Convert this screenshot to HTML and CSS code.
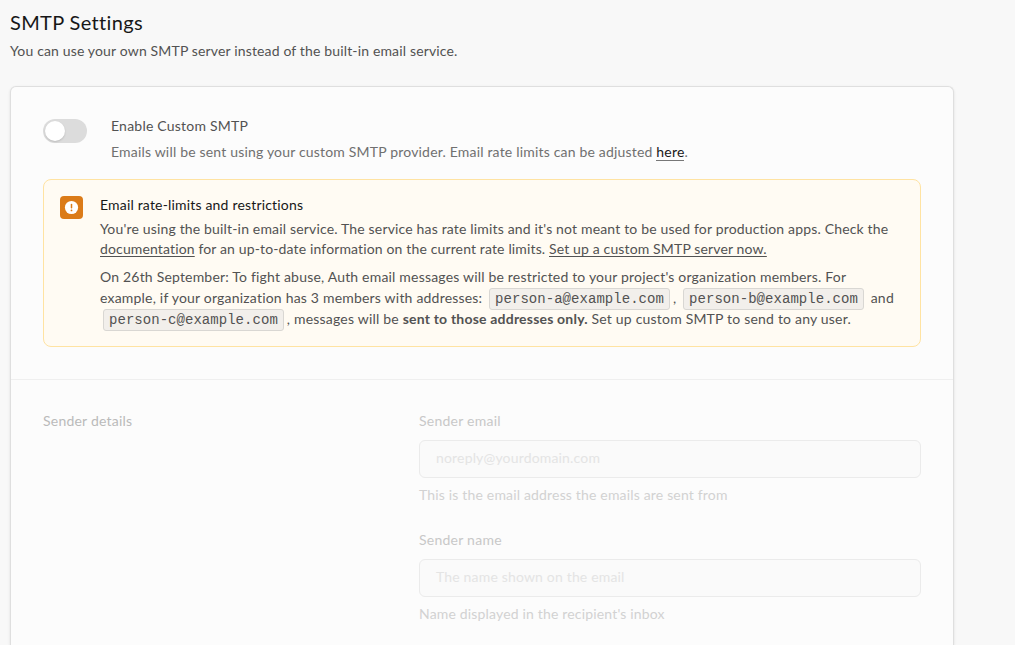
FILE: index.html
```html
<!DOCTYPE html>
<html lang="en">
<head>
<meta charset="utf-8">
<title>SMTP Settings</title>
<link rel="stylesheet" href="styles.css">
</head>
<body>
<main class="page">
  <header class="heading">
    <h1 class="title">SMTP Settings</h1>
    <p class="subtitle">You can use your own SMTP server instead of the built-in email service.</p>
  </header>
  <section class="card">
    <div class="enable">
      <div class="toggle-row">
        <button class="switch" role="switch" aria-checked="false" aria-label="Enable Custom SMTP"><span class="knob"></span></button>
        <div class="toggle-copy">
          <div class="label">Enable Custom SMTP</div>
          <div class="hint">Emails will be sent using your custom SMTP provider. Email rate limits can be adjusted <a class="here">here</a>.</div>
        </div>
      </div>
      <div class="alert">
        <span class="alert-icon">
          <svg width="15" height="15" viewBox="0 0 15 15"><circle cx="7.5" cy="7.5" r="6.6" fill="#fff"/><path d="M7.5 4.5v3.3" stroke="#db7b18" stroke-width="1.5" stroke-linecap="round"/><circle cx="7.5" cy="10.4" r=".9" fill="#db7b18"/></svg>
        </span>
        <div class="alert-copy">
          <div class="alert-title">Email rate-limits and restrictions</div>
          <p class="first"><span class="line l1">You're using the built-in email service. The service has rate limits and it's not meant to be used for production apps. Check the</span> <span class="line l2"><a class="link">documentation</a> for an up-to-date information on the current rate limits. <a class="link">Set up a custom SMTP server now.</a></span></p>
          <p class="second"><span class="line l3">On 26th September: To fight abuse, Auth email messages will be restricted to your project's organization members. For</span> <span class="line l4">example, if your organization has 3 members with addresses: <code>person-a@example.com</code>, <code>person-b@example.com</code> and</span> <span class="line l5"><code>person-c@example.com</code>, messages will be <strong>sent to those addresses only.</strong> Set up custom SMTP to send to any user.</span></p>
        </div>
      </div>
    </div>
    <div class="sender">
      <div class="sender-title">Sender details</div>
      <div class="fields">
        <div class="field">
          <div class="field-label">Sender email</div>
          <div class="input">noreply@yourdomain.com</div>
          <div class="help">This is the email address the emails are sent from</div>
        </div>
        <div class="field">
          <div class="field-label">Sender name</div>
          <div class="input">The name shown on the email</div>
          <div class="help">Name displayed in the recipient's inbox</div>
        </div>
      </div>
    </div>
  </section>
</main>
</body>
</html>
```
FILE: styles.css
```css
* { box-sizing: border-box; }
html, body { margin: 0; height: 100%; overflow: hidden; }
body { background: #f8f8f8; color: #525252; font: 14px/20px Lato, "Liberation Sans", sans-serif; letter-spacing: .17px; }
h1, p { margin: 0; font-weight: 400; }
.page { height: 100%; display: flex; flex-direction: column; padding: 8px 61px 0 10px; }
.title { font-size: 20px; line-height: 28px; letter-spacing: .35px; color: #171717; }
.subtitle { margin-top: 5px; letter-spacing: .15px; white-space: nowrap; }
.card { flex: 1; margin-top: 25px; background: #fcfcfc; border: 1px solid #dfdfdf; border-bottom: 0; border-radius: 6px 6px 0 0; box-shadow: 0 1px 3px rgba(0,0,0,.1); }
.enable { height: 293px; padding: 29px 32px 0; border-bottom: 1px solid #efefef; }
.toggle-row { display: flex; gap: 24px; }
.switch { width: 44px; height: 24px; margin-top: 3px; padding: 2px; border: 0; border-radius: 12px; background: #dcdcdc; display: flex; }
.knob { width: 20px; height: 20px; border-radius: 50%; background: #fff; box-shadow: 0 1px 2px rgba(0,0,0,.15); }
.toggle-copy { white-space: nowrap; }
.label { letter-spacing: .22px; }
.hint { margin-top: 6px; letter-spacing: .185px; color: #707070; }
.here { color: #171717; border-bottom: 1px solid #777; }
.alert { display: flex; gap: 17px; height: 168px; margin-top: 17px; padding: 16px; border: 1px solid #ffe3a2; border-radius: 8px; background: #fffbf3; }
.alert-icon { width: 23px; height: 23px; border-radius: 4px; background: #db7b18; display: flex; align-items: center; justify-content: center; flex: none; }
.alert-title { color: #171717; line-height: 20px; margin-top: -1px; letter-spacing: .18px; }
.first { margin-top: 4px; }
.second { margin-top: 7px; line-height: 21px; }
.line { display: block; white-space: nowrap; }
.l1 { letter-spacing: .165px; }
.l2 { letter-spacing: .14px; }
.l3 { letter-spacing: .19px; }
.l4, .l5 { height: 21px; letter-spacing: .2px; }
.link { text-decoration: underline; text-underline-offset: 2px; }
code { display: inline-block; height: 22px; margin: -2px 3px; padding: 0 5px; border: 1px solid #d9d7d3; border-radius: 3px; background: #f2efeb; font: 14px/20px "Liberation Mono", monospace; letter-spacing: .04px; vertical-align: baseline; }
.sender { display: grid; grid-template-columns: 376px 502px; padding: 31px 32px 0; }
.sender-title { color: #bababa; letter-spacing: .22px; }
.fields { display: grid; gap: 25px; align-content: start; color: #cbcbcb; }
.field-label { color: #c8c8c8; letter-spacing: .25px; }
.input { margin: 9px 0 7px; height: 38px; padding: 7px 16px; border: 1px solid #ebebeb; border-radius: 6px; background: #fafafa; color: #e4e4e4; letter-spacing: .17px; }
.help { color: #d2d2d2; }
```
